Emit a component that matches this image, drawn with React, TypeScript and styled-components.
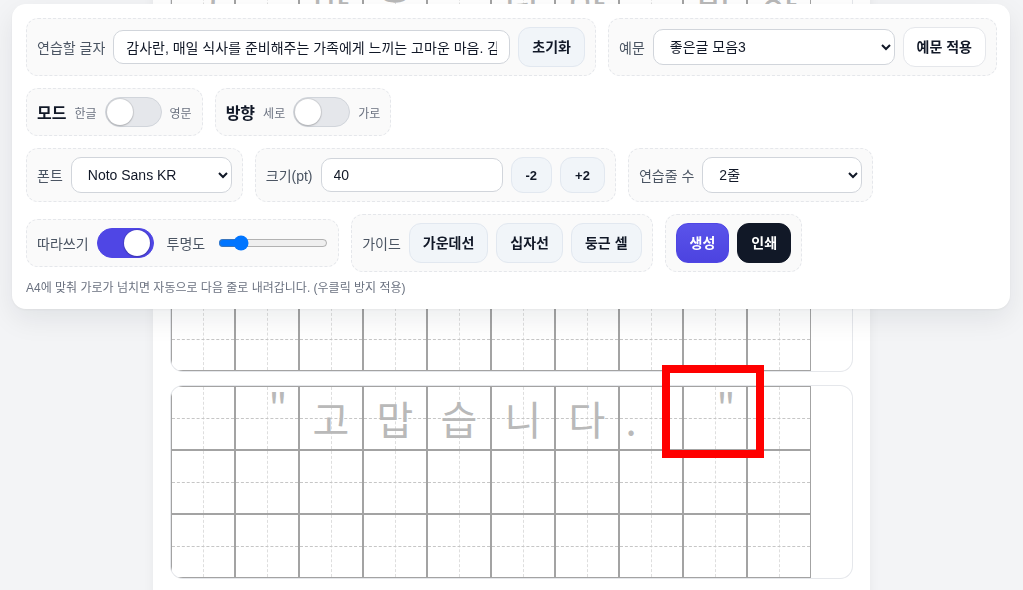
import React from "react";
import styled, { createGlobalStyle, css } from "styled-components";

const GlobalStyle = createGlobalStyle`
  html, body { margin: 0; padding: 0; background: #f3f4f6; overflow: hidden; }
  body { font-family: "Liberation Sans", "Noto Sans CJK KR", sans-serif; color: #111827; }
  *, *::before, *::after { box-sizing: border-box; }
`;

const Page = styled.div`
  position: relative;
  display: flow-root;
  min-height: 100vh;
`;

/* ---------- control panel ---------- */

const Panel = styled.header`
  position: fixed;
  top: 4px;
  left: 12px;
  width: 998px;
  z-index: 10;
  display: flex;
  flex-direction: column;
  gap: 12px;
  padding: 14px 14px 13px;
  background: #ffffff;
  border-radius: 14px;
  box-shadow: 0 10px 28px rgba(15, 23, 42, 0.08), 0 1px 3px rgba(15, 23, 42, 0.05);
`;

const Row = styled.div`
  display: flex;
  align-items: center;
  gap: 12px;
`;

const Group = styled.div<{ $basis?: number; $gap?: number }>`
  display: flex;
  align-items: center;
  gap: ${(p) => p.$gap ?? 8}px;
  padding: 8px 10px;
  background: #fafafa;
  border: 1px dashed #e5e7eb;
  border-radius: 12px;
  ${(p) =>
    p.$basis &&
    css`
      flex: 0 0 ${p.$basis}px;
    `}
`;

const Pair = styled.div`
  display: flex;
  align-items: center;
  gap: 8px;
`;

const Label = styled.span`
  font-size: 14px;
  color: #4b5563;
  white-space: nowrap;
`;

const Title = styled.span`
  font-size: 16px;
  font-weight: 700;
  color: #111827;
  white-space: nowrap;
`;

const SubLabel = styled.span`
  font-size: 12px;
  color: #6b7280;
  white-space: nowrap;
`;

const TextInput = styled.input<{ $w?: number }>`
  ${(p) => (p.$w ? `width: ${p.$w}px;` : "flex: 1; min-width: 0;")}
  height: 34px;
  padding: 0 12px;
  border: 1px solid #d1d5db;
  border-radius: 10px;
  background: #ffffff;
  font-family: inherit;
  font-size: 14px;
  color: #111827;
  outline: none;
`;

const Select = styled.select<{ $w?: number }>`
  ${(p) => (p.$w ? `width: ${p.$w}px;` : "flex: 1; min-width: 0;")}
  height: 36px;
  padding: 0 8px 0 12px;
  border: 1px solid #d1d5db;
  border-radius: 10px;
  background-color: #ffffff;
  font-family: inherit;
  font-size: 14px;
  color: #111827;
  outline: none;
`;

type Variant = "soft" | "outline" | "primary" | "dark";

const variants: Record<Variant, ReturnType<typeof css>> = {
  soft: css`
    background: #f1f5f9;
    border-color: #e2e8f0;
    color: #111827;
  `,
  outline: css`
    background: #ffffff;
    border-color: #e5e7eb;
    color: #111827;
  `,
  primary: css`
    background: linear-gradient(180deg, #5a53ea 0%, #4c43e0 100%);
    border-color: #4f46e5;
    color: #ffffff;
  `,
  dark: css`
    background: #111827;
    border-color: #111827;
    color: #ffffff;
  `,
};

const Button = styled.button<{ $variant?: Variant; $small?: boolean }>`
  height: ${(p) => (p.$small ? 36 : 40)}px;
  padding: 0 ${(p) => (p.$small ? 14 : 13)}px;
  border: 1px solid transparent;
  border-radius: 12px;
  font-family: inherit;
  font-size: ${(p) => (p.$small ? 13 : 14)}px;
  line-height: 1;
  font-weight: 700;
  white-space: nowrap;
  cursor: pointer;
  ${(p) => variants[p.$variant ?? "soft"]}
`;

const Toggle = styled.span<{ $on?: boolean }>`
  position: relative;
  flex: 0 0 auto;
  width: 57px;
  height: 30px;
  border-radius: 999px;
  background: ${(p) => (p.$on ? "#4f46e5" : "#e5e7eb")};
  border: 1px solid ${(p) => (p.$on ? "#4f46e5" : "#d1d5db")};

  &::after {
    content: "";
    position: absolute;
    top: 1px;
    ${(p) => (p.$on ? "right: 3px;" : "left: 1px;")}
    width: 26px;
    height: 26px;
    border-radius: 50%;
    background: #ffffff;
    box-shadow: 0 0 0 1px rgba(0, 0, 0, 0.08), 0 1px 2px rgba(0, 0, 0, 0.18);
  }
`;

const Range = styled.input`
  width: 110px;
  margin: 0;
`;

const Caption = styled.p`
  margin: -4px 0 0;
  font-size: 12px;
  line-height: 16px;
  color: #6b7280;
`;

/* ---------- practice sheet ---------- */

const Paper = styled.main`
  width: 717px;
  margin: -46px auto 0;
  padding: 18px;
  display: flex;
  flex-direction: column;
  gap: 15px;
  background: #ffffff;
  box-shadow: 0 0 10px rgba(15, 23, 42, 0.06);
`;

const Block = styled.section`
  flex: 0 0 auto;
  width: 681px;
  height: 192px;
  border-radius: 12px;
  overflow: hidden;
  background: #ffffff;
  box-shadow: 0 0 0 1px #e5e7eb;
`;

const Grid = styled.div`
  width: 640px;
  display: flex;
  flex-direction: column;
`;

const GridRow = styled.div`
  display: flex;
`;

const Cell = styled.div`
  position: relative;
  width: 64px;
  height: 64px;
  border: 1px solid #a3a3a3;
  display: flex;
  align-items: center;
  justify-content: center;

  &::before {
    content: "";
    position: absolute;
    left: 50%;
    top: 0;
    bottom: 0;
    border-left: 1px dashed #dedede;
  }
  &::after {
    content: "";
    position: absolute;
    top: 50%;
    left: 0;
    right: 0;
    border-top: 1px dashed #c6c6c6;
  }
`;

const Glyph = styled.span<{ $dx: number; $dy: number }>`
  position: relative;
  z-index: 1;
  font-family: "Noto Sans CJK KR", sans-serif;
  font-size: 40px;
  font-weight: 400;
  line-height: 1;
  color: #b9b9b9;
  transform: translate(${(p) => p.$dx}px, ${(p) => p.$dy}px);
`;

const Annotation = styled.div`
  position: absolute;
  left: 662px;
  top: 365px;
  width: 102px;
  height: 93px;
  border: 8px solid #ff0000;
  z-index: 5;
  pointer-events: none;
`;

const punctOffset: Record<string, [number, number]> = {
  '"': [11, -12],
  ".": [-20, 0],
};

const PRACTICE_TEXT =
  '감사란, 매일 식사를 준비해주는 가족에게 느끼는 고마운 마음. 감사의 마음을 담아 말해 보세요. "고맙습니다."';

const lines = ["그 마음 담아 말하", "세요. 오늘도 따뜻", ' "고맙습니다." ', ""];
const PRACTICE_ROWS = 2;
const COLS = 10;

function TextRow({ text }: { text: string }) {
  const chars = Array.from(text.padEnd(COLS, " ")).slice(0, COLS);
  return (
    <GridRow>
      {chars.map((ch, i) => {
        const [dx, dy] = punctOffset[ch] ?? [0, 0];
        return (
          <Cell key={i}>
            {ch.trim() && (
              <Glyph $dx={dx} $dy={dy}>
                {ch}
              </Glyph>
            )}
          </Cell>
        );
      })}
    </GridRow>
  );
}

function EmptyRow() {
  return (
    <GridRow>
      {Array.from({ length: COLS }, (_, i) => (
        <Cell key={i} />
      ))}
    </GridRow>
  );
}

export default function App() {
  return (
    <Page>
      <GlobalStyle />
      <Panel>
        <Row>
          <Group $basis={570}>
            <Label>연습할 글자</Label>
            <TextInput readOnly value={PRACTICE_TEXT} />
            <Button $variant="soft">초기화</Button>
          </Group>
          <Group $basis={389}>
            <Label>예문</Label>
            <Select defaultValue="3">
              <option value="1">좋은글 모음1</option>
              <option value="2">좋은글 모음2</option>
              <option value="3">좋은글 모음3</option>
            </Select>
            <Button $variant="outline">예문 적용</Button>
          </Group>
        </Row>

        <Row>
          <Group>
            <Title>모드</Title>
            <SubLabel>한글</SubLabel>
            <Toggle />
            <SubLabel>영문</SubLabel>
          </Group>
          <Group>
            <Title>방향</Title>
            <SubLabel>세로</SubLabel>
            <Toggle />
            <SubLabel>가로</SubLabel>
          </Group>
        </Row>

        <Row>
          <Group>
            <Label>폰트</Label>
            <Select $w={161} defaultValue="noto">
              <option value="noto">Noto Sans KR</option>
              <option value="nanum">Nanum Gothic</option>
            </Select>
          </Group>
          <Group>
            <Label>크기(pt)</Label>
            <TextInput $w={182} readOnly value="40" />
            <Button $variant="soft" $small>
              -2
            </Button>
            <Button $variant="soft" $small>
              +2
            </Button>
          </Group>
          <Group>
            <Label>연습줄 수</Label>
            <Select $w={160} defaultValue="2">
              <option value="1">1줄</option>
              <option value="2">2줄</option>
              <option value="3">3줄</option>
            </Select>
          </Group>
        </Row>

        <Row>
          <Group $gap={13}>
            <Pair>
              <Label>따라쓰기</Label>
              <Toggle $on />
            </Pair>
            <Label>투명도</Label>
            <Range type="range" min={0.05} max={1} step={0.05} defaultValue={0.2} />
          </Group>
          <Group>
            <Label>가이드</Label>
            <Button $variant="soft">가운데선</Button>
            <Button $variant="soft">십자선</Button>
            <Button $variant="soft">둥근 셀</Button>
          </Group>
          <Group>
            <Button $variant="primary">생성</Button>
            <Button $variant="dark">인쇄</Button>
          </Group>
        </Row>

        <Caption>A4에 맞춰 가로가 넘치면 자동으로 다음 줄로 내려갑니다. (우클릭 방지 적용)</Caption>
      </Panel>

      <Paper>
        {lines.map((line, b) => (
          <Block key={b}>
            <Grid>
              <TextRow text={line} />
              {Array.from({ length: PRACTICE_ROWS }, (_, r) => (
                <EmptyRow key={r} />
              ))}
            </Grid>
          </Block>
        ))}
      </Paper>

      <Annotation />
    </Page>
  );
}
